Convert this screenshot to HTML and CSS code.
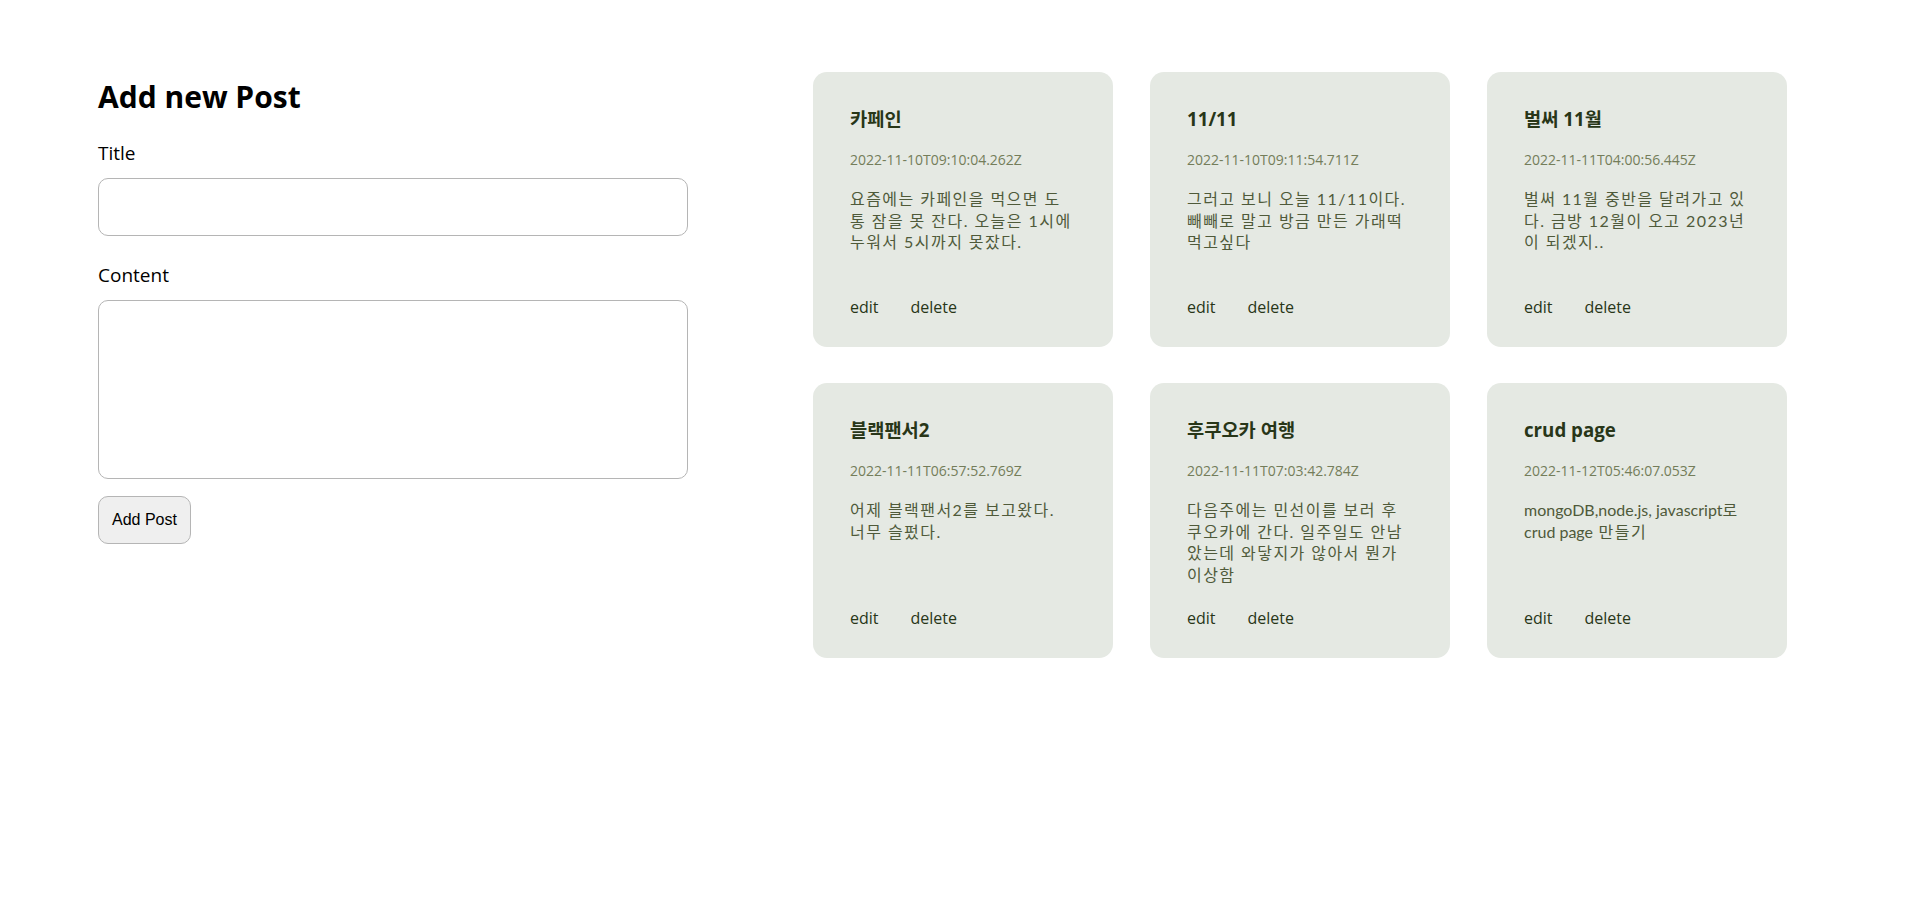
FILE: index.html
```html
<html>

<head>
    <title>CRUD Page</title>
    <meta charset="utf-8">
    <link rel="stylesheet" href="styles.css">
</head>

<body class="body">
    <div class="page">
        <div class="formDiv">
            <h2 class="formTitle">Add new Post</h2>
            <label class="label" for="title">Title</label>
            <input type="text" id="title" class="titleInput">
            <label class="label" for="content">Content</label>
            <textarea id="content" class="contentInput"></textarea>
            <button class="addButton">Add Post</button>
        </div>
        <div class="postList">
            <div class="post">
                <h3 class="postTitle">카페인</h3>
                <p class="postDate">2022-11-10T09:10:04.262Z</p>
                <p class="postContent">요즘에는 카페인을 먹으면 도통 잠을 못 잔다. 오늘은 1시에 누워서 5시까지 못잤다.</p>
                <div class="postButtons">
                    <span class="postButton">edit</span>
                    <span class="postButton">delete</span>
                </div>
            </div>
            <div class="post">
                <h3 class="postTitle">11/11</h3>
                <p class="postDate">2022-11-10T09:11:54.711Z</p>
                <p class="postContent">그러고 보니 오늘 11/11이다. 빼빼로 말고 방금 만든 가래떡 먹고싶다</p>
                <div class="postButtons">
                    <span class="postButton">edit</span>
                    <span class="postButton">delete</span>
                </div>
            </div>
            <div class="post">
                <h3 class="postTitle">벌써 11월</h3>
                <p class="postDate">2022-11-11T04:00:56.445Z</p>
                <p class="postContent">벌써 11월 중반을 달려가고 있다. 금방 12월이 오고 2023년이 되겠지..</p>
                <div class="postButtons">
                    <span class="postButton">edit</span>
                    <span class="postButton">delete</span>
                </div>
            </div>
            <div class="post">
                <h3 class="postTitle">블랙팬서2</h3>
                <p class="postDate">2022-11-11T06:57:52.769Z</p>
                <p class="postContent">어제 블랙팬서2를 보고왔다. 너무 슬펐다.</p>
                <div class="postButtons">
                    <span class="postButton">edit</span>
                    <span class="postButton">delete</span>
                </div>
            </div>
            <div class="post">
                <h3 class="postTitle">후쿠오카 여행</h3>
                <p class="postDate">2022-11-11T07:03:42.784Z</p>
                <p class="postContent">다음주에는 민선이를 보러 후쿠오카에 간다. 일주일도 안남았는데 와닿지가 않아서 뭔가 이상함</p>
                <div class="postButtons">
                    <span class="postButton">edit</span>
                    <span class="postButton">delete</span>
                </div>
            </div>
            <div class="post">
                <h3 class="postTitle">crud page</h3>
                <p class="postDate">2022-11-12T05:46:07.053Z</p>
                <p class="postContent"><span class="latin">mongoDB,node.js, javascript</span>로 <span class="latin">crud page</span> 만들기</p>
                <div class="postButtons">
                    <span class="postButton">edit</span>
                    <span class="postButton">delete</span>
                </div>
            </div>
        </div>
    </div>
</body>

</html>
```
FILE: styles.css
```css
.body {
    margin: 0;
    font-family: "Open Sans", "Noto Sans CJK KR", sans-serif;
    background-color: #ffffff;
    color: #000000;
}

.page {
    display: flex;
    align-items: flex-start;
    gap: 125px;
    padding: 72px 0 0 98px;
}

.formDiv {
    display: flex;
    flex-direction: column;
    align-items: flex-start;
    width: 590px;
}

.formTitle {
    margin: 4px 0 23px 0;
    font-size: 30px;
    font-weight: 700;
}

.label {
    font-size: 19px;
    margin-bottom: 12px;
}

.titleInput {
    box-sizing: border-box;
    width: 590px;
    height: 58px;
    border: 1px solid #b5b5b5;
    border-radius: 10px;
    margin-bottom: 26px;
}

.contentInput {
    box-sizing: border-box;
    width: 590px;
    height: 179px;
    border: 1px solid #b5b5b5;
    border-radius: 10px;
    resize: none;
    margin-bottom: 17px;
}

.addButton {
    font-family: "Liberation Sans", Arial, sans-serif;
    font-size: 16px;
    padding: 14px 13px;
    background-color: #efefef;
    border: 1px solid #b5b5b5;
    border-radius: 10px;
    color: #000000;
}

.postList {
    display: grid;
    grid-template-columns: repeat(3, 300px);
    column-gap: 37px;
    row-gap: 36px;
}

.post {
    box-sizing: border-box;
    height: 275px;
    padding: 35px 37px 29px 37px;
    background-color: #e5e9e3;
    border-radius: 14px;
    display: flex;
    flex-direction: column;
}

.postTitle {
    margin: 0;
    font-size: 18.72px;
    line-height: 24px;
    font-weight: 700;
    color: #283618;
}

.postDate {
    margin: 19px 0 0 0;
    font-size: 14px;
    line-height: 20px;
    color: #747d5a;
}

.postContent {
    margin: 18px 0 0 0;
    font-family: Lato, "Noto Sans CJK KR", sans-serif;
    font-size: 16px;
    line-height: 21.5px;
    letter-spacing: 1.45px;
    color: #4f5a3a;
    flex: 1;
}

.latin {
    letter-spacing: 0;
}

.postButtons {
    display: flex;
    gap: 32px;
    line-height: 22px;
}

.postButton {
    font-size: 16px;
    color: #283618;
}
```
